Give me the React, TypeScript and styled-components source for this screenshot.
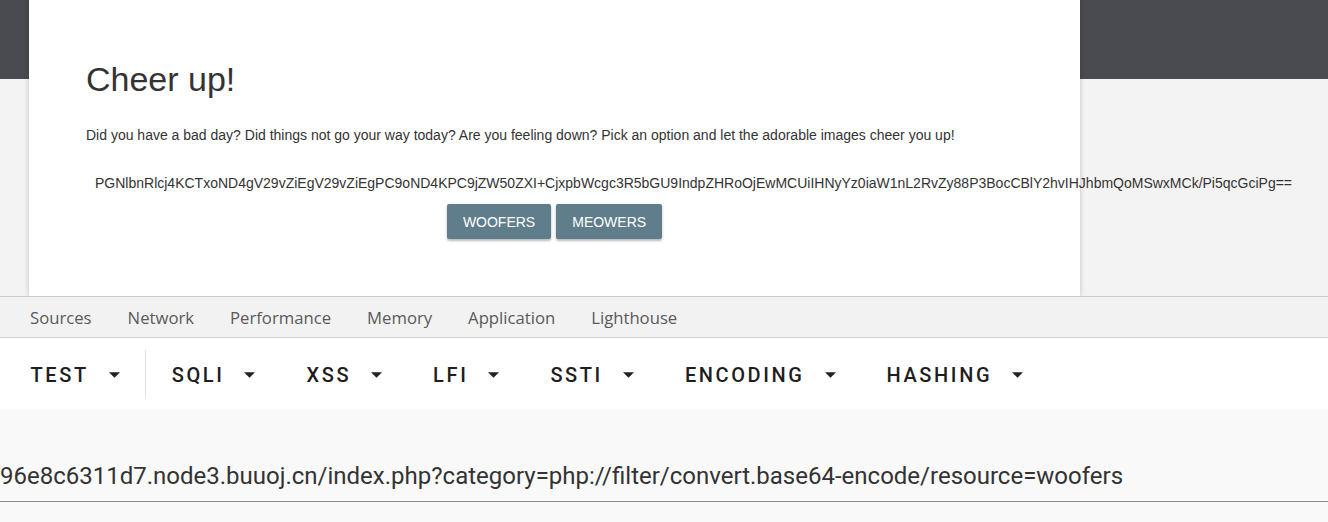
import styled, { createGlobalStyle } from 'styled-components'

const GlobalStyle = createGlobalStyle`
  html, body {
    margin: 0;
    padding: 0;
    width: 1328px;
    height: 522px;
    overflow: hidden;
    background: #f9f9f9;
  }
`

const PAYLOAD =
  'PGNlbnRlcj4KCTxoND4gV29vZiEgV29vZiEgPC9oND4KPC9jZW50ZXI+CjxpbWcgc3R5bGU9IndpZHRoOjEwMCUiIHNyYz0iaW1nL2RvZy88P3BocCBlY2hvIHJhbmQoMSwxMCk/Pi5qcGciPg=='

const tabs = ['Sources', 'Network', 'Performance', 'Memory', 'Application', 'Lighthouse']
const menus = ['TEST', 'SQLI', 'XSS', 'LFI', 'SSTI', 'ENCODING', 'HASHING']

// the page being inspected
const Viewport = styled.div`
  height: 296px;
  background: linear-gradient(#4a4b50 0 79px, #f3f3f3 79px);
  overflow: hidden;
`

const Card = styled.div`
  margin-left: 29px;
  width: 1051px;
  height: 296px;
  box-sizing: border-box;
  padding: 58px 0 0 57px;
  background: #fff;
  box-shadow: 0 0 5px rgba(0, 0, 0, 0.22);
  font-family: 'Liberation Sans', Arial, sans-serif;
  color: #333;
`

const Title = styled.h1`
  margin: 0;
  font-size: 34px;
  font-weight: 400;
  line-height: 42px;
`

const Lead = styled.p`
  margin: 25px 0 0;
  font-size: 14px;
  line-height: 20px;
`

const Payload = styled.div`
  margin-top: 28px;
  padding-left: 9px;
  font-size: 14px;
  line-height: 20px;
  white-space: nowrap;
`

const Buttons = styled.div`
  display: flex;
  justify-content: center;
  gap: 5px;
  margin: 11px 0 0 -57px;
`

const Btn = styled.button`
  height: 35px;
  padding: 0 16px;
  border: 0;
  border-radius: 2px;
  background: #607d8b;
  color: #fff;
  font-family: 'Liberation Sans', Arial, sans-serif;
  font-size: 14px;
  text-transform: uppercase;
  box-shadow: 0 2px 2px rgba(0, 0, 0, 0.2), 0 1px 4px rgba(0, 0, 0, 0.12);
`

// devtools tab strip
const TabStrip = styled.div`
  display: flex;
  align-items: center;
  gap: 36px;
  height: 40px;
  padding-left: 30px;
  border-top: 1px solid #cccccc;
  border-bottom: 1px solid #d0d0d0;
  background: #f2f2f2;
  font-family: 'Open Sans', 'Noto Sans', sans-serif;
  font-size: 16.7px;
  color: #5a5a5a;
`

const Tab = styled.span``

// extension toolbar
const Toolbar = styled.div`
  display: flex;
  align-items: center;
  height: 71px;
  box-sizing: border-box;
  padding: 3px 0 0 5px;
  background: #fff;
`

const Menu = styled.div`
  display: flex;
  align-items: center;
  padding: 0 25.5px;
  font-family: Roboto, 'Noto Sans', sans-serif;
  font-size: 20px;
  font-weight: 500;
  letter-spacing: 2.6px;
  color: #1e1e1e;
`

const Caret = styled.svg`
  margin-left: 20px;
  width: 11px;
  height: 6px;
`

const Divider = styled.div`
  width: 1px;
  height: 48px;
  margin-top: -3px;
  background: #e2e2e2;
`

const UrlArea = styled.div`
  padding-top: 50px;
  background: #f9f9f9;
`

const UrlField = styled.div`
  padding-bottom: 8px;
  border-bottom: 1px solid #8c8c8c;
  font-family: Roboto, 'Noto Sans', sans-serif;
  font-size: 24px;
  line-height: 34px;
  color: #333;
  white-space: nowrap;
`

const App = () => {
  return (
    <>
      <GlobalStyle />
      <Viewport>
        <Card>
          <Title>Cheer up!</Title>
          <Lead>
            Did you have a bad day? Did things not go your way today? Are you feeling down? Pick an option and
            let the adorable images cheer you up!
          </Lead>
          <Payload>{PAYLOAD}</Payload>
          <Buttons>
            <Btn>Woofers</Btn>
            <Btn>Meowers</Btn>
          </Buttons>
        </Card>
      </Viewport>
      <TabStrip>
        {tabs.map((t) => (
          <Tab key={t}>{t}</Tab>
        ))}
      </TabStrip>
      <Toolbar>
        {menus.map((m, i) => (
          <>
            <Menu key={m}>
              {m}
              <Caret viewBox="0 0 10 5">
                <path d="M0 0h10L5 5z" fill="#222" />
              </Caret>
            </Menu>
            {i === 0 && <Divider />}
          </>
        ))}
      </Toolbar>
      <UrlArea>
        <UrlField>96e8c6311d7.node3.buuoj.cn/index.php?category=php://filter/convert.base64-encode/resource=woofers</UrlField>
      </UrlArea>
    </>
  )
}

export default App
